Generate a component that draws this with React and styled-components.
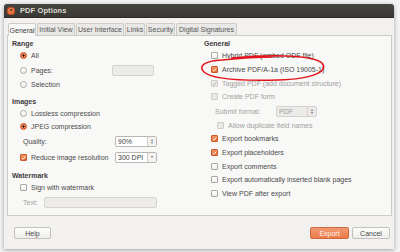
import React from "react";
import styled, { createGlobalStyle, css } from "styled-components";

const Global = createGlobalStyle`
  html, body { margin: 0; padding: 0; }
  body {
    width: 400px; height: 252px; overflow: hidden;
    background: #f3f3f3;
    font-family: "Liberation Sans", Arial, sans-serif;
    font-size: 7px;
    color: #4a4a4a;
  }
`;

const Stage = styled.div`
  position: relative;
  width: 400px;
  height: 252px;
  padding: 4px 0 0 4px;
  box-sizing: border-box;
`;

const Window = styled.div`
  width: 390px;
  height: 245px;
  display: flex;
  flex-direction: column;
  background: #f2f1f0;
  box-shadow: 0 1px 4px rgba(0,0,0,0.35);
  border-radius: 3px 3px 0 0;
  overflow: hidden;
`;

const TitleBar = styled.div`
  height: 13px;
  flex: none;
  display: flex;
  align-items: center;
  gap: 5px;
  padding-left: 3px;
  background: linear-gradient(#45443f, #3a3935);
  border-bottom: 1px solid #2a2926;
`;

const CloseBtn = styled.div`
  width: 8px;
  height: 8px;
  border-radius: 50%;
  background: radial-gradient(circle at 50% 40%, #f48a5a, #d9531e);
  box-shadow: inset 0 0 0 0.5px #a8401a;
  display: flex;
  align-items: center;
  justify-content: center;
  color: #3a2018;
  font-size: 5px;
  line-height: 1;
  font-weight: bold;
`;

const Title = styled.div`
  color: #dfdbd2;
  font-weight: bold;
  font-size: 7.5px;
  letter-spacing: 0.1px;
`;

const Body = styled.div`
  flex: 1;
  display: flex;
  flex-direction: column;
  padding: 4px 2px 0 3px;
`;

const Tabs = styled.div`
  display: flex;
  height: 13px;
  padding-left: 1px;
  gap: 1px;
  align-items: flex-end;
`;

const Tab = styled.div`
  height: 12px;
  box-sizing: border-box;
  padding: 0 2px;
  display: flex;
  align-items: center;
  border: 1px solid #cdcbc8;
  border-bottom: none;
  border-radius: 2px 2px 0 0;
  background: #e9e8e6;
  color: #555;
  white-space: nowrap;
  width: ${(p) => p.w}px;
  justify-content: center;
  ${(p) =>
    p.active &&
    css`
      height: 13px;
      background: #f8f8f7;
      color: #3c3c3c;
      margin-bottom: -1px;
      position: relative;
      z-index: 1;
    `}
`;

const Panel = styled.div`
  height: 181px;
  box-sizing: border-box;
  border: 1px solid #cdcbc8;
  background: #f8f8f7;
  display: grid;
  grid-template-columns: 192px 1fr;
  padding: 2px 0 0 4px;
`;

const Column = styled.div`
  display: flex;
  flex-direction: column;
`;

const Row = styled.div`
  height: 11px;
  display: flex;
  align-items: center;
  margin-top: ${(p) => p.mt || 0}px;
  padding-left: ${(p) => p.indent || 0}px;
  white-space: nowrap;
  color: ${(p) => (p.disabled ? "#a3a19e" : "#4a4a4a")};
`;

const Header = styled(Row)`
  font-weight: bold;
  color: #3c3c3c;
`;

const Label = styled.span`
  margin-left: 4px;
`;

const FieldLabel = styled.span`
  width: ${(p) => p.w}px;
  flex: none;
`;

const Radio = styled.span`
  width: 7px;
  height: 7px;
  box-sizing: border-box;
  border-radius: 50%;
  flex: none;
  border: 1px solid #aaa8a5;
  background: linear-gradient(#fff, #f0efee);
  ${(p) =>
    p.checked &&
    css`
      border-color: #c8541f;
      background: radial-gradient(circle, #4a2414 0 1.1px, #f5a47c 1.4px 1.8px, #e96a34 2.2px);
    `}
`;

const Box = styled.span`
  width: 7px;
  height: 7px;
  box-sizing: border-box;
  border-radius: 1px;
  flex: none;
  border: 1px solid #aaa8a5;
  background: linear-gradient(#fff, #f0efee);
  display: flex;
  align-items: center;
  justify-content: center;
  ${(p) =>
    p.checked &&
    css`
      border-color: #cc5a28;
      background: linear-gradient(#f39466, #e76d37);
    `}
  ${(p) =>
    p.disabled &&
    css`
      border-color: #cfcdca;
      background: #ebeae8;
    `}
`;

const Check = ({ color = "#fff" }) => (
  <svg width="6" height="6" viewBox="0 0 6 6">
    <path d="M0.8 3.1 L2.4 4.6 L5.2 1.2" fill="none" stroke={color} strokeWidth="1.1" />
  </svg>
);

const Input = styled.div`
  width: ${(p) => p.w}px;
  height: 11px;
  box-sizing: border-box;
  border: 1px solid ${(p) => (p.disabled ? "#d5d3d0" : "#b9b7b4")};
  border-radius: 2px;
  background: ${(p) => (p.disabled ? "#ecebe9" : "#fff")};
  display: flex;
  align-items: center;
  margin-left: ${(p) => p.ml || 0}px;
  color: ${(p) => (p.disabled ? "#a3a19e" : "#3c3c3c")};
  overflow: hidden;
`;

const InputText = styled.span`
  flex: 1;
  padding-left: 2px;
`;

const Stepper = styled.span`
  width: 8px;
  height: 100%;
  border-left: 1px solid ${(p) => (p.disabled ? "#d5d3d0" : "#d0cecb")};
  background: ${(p) => (p.disabled ? "#ecebe9" : "#f4f3f2")};
  display: flex;
  flex-direction: column;
  align-items: center;
  justify-content: center;
  font-size: 3.5px;
  line-height: 3px;
  color: #777;
`;

const ButtonRow = styled.div`
  display: flex;
  align-items: center;
  padding: 11px 2px 0 7px;
  gap: 3px;
`;

const Spacer = styled.div`
  flex: 1;
`;

const Button = styled.div`
  width: ${(p) => p.w}px;
  height: 12px;
  box-sizing: border-box;
  border-radius: 2px;
  display: flex;
  align-items: center;
  justify-content: center;
  border: 1px solid #c3c1be;
  background: linear-gradient(#fcfcfb, #efeeed);
  color: #4a4a4a;
  ${(p) =>
    p.primary &&
    css`
      border-color: #d0693c;
      background: linear-gradient(#f39a72, #ec7b4b);
      color: #fff3ec;
    `}
`;

const Scribble = styled.svg`
  position: absolute;
  left: 0;
  top: 0;
  pointer-events: none;
`;

const tabs = [
  ["General", 28],
  ["Initial View", 38],
  ["User Interface", 48],
  ["Links", 20],
  ["Security", 29],
  ["Digital Signatures", 61],
];

export default function App() {
  return (
    <>
      <Global />
      <Stage>
        <Window>
          <TitleBar>
            <CloseBtn>×</CloseBtn>
            <Title>PDF Options</Title>
          </TitleBar>
          <Body>
            <Tabs>
              {tabs.map(([t, w], i) => (
                <Tab key={t} w={w} active={i === 0}>
                  {t}
                </Tab>
              ))}
            </Tabs>
            <Panel>
              <Column>
                <Header>Range</Header>
                <Row mt={1} indent={8}>
                  <Radio checked />
                  <Label>All</Label>
                </Row>
                <Row mt={4} indent={8}>
                  <Radio />
                  <Label style={{ width: 81 }}>Pages:</Label>
                  <Input w={42} disabled />
                </Row>
                <Row mt={3} indent={8}>
                  <Radio />
                  <Label>Selection</Label>
                </Row>
                <Header mt={6}>Images</Header>
                <Row mt={1} indent={8}>
                  <Radio />
                  <Label>Lossless compression</Label>
                </Row>
                <Row mt={2} indent={8}>
                  <Radio checked />
                  <Label>JPEG compression</Label>
                </Row>
                <Row mt={4} indent={11}>
                  <FieldLabel w={92}>Quality:</FieldLabel>
                  <Input w={42}>
                    <InputText>90%</InputText>
                    <Stepper>
                      <span>▲</span>
                      <span>▼</span>
                    </Stepper>
                  </Input>
                </Row>
                <Row mt={5} indent={8}>
                  <Box checked>
                    <Check />
                  </Box>
                  <Label style={{ width: 84 }}>Reduce image resolution</Label>
                  <Input w={42}>
                    <InputText>300 DPI</InputText>
                    <Stepper>▼</Stepper>
                  </Input>
                </Row>
                <Header mt={7}>Watermark</Header>
                <Row mt={1} indent={8}>
                  <Box />
                  <Label>Sign with watermark</Label>
                </Row>
                <Row mt={4} indent={11} disabled>
                  <FieldLabel w={21}>Text:</FieldLabel>
                  <Input w={113} disabled />
                </Row>
              </Column>
              <Column>
                <Header>General</Header>
                <Row mt={1} indent={7}>
                  <Box />
                  <Label>Hybrid PDF (embed ODF file)</Label>
                </Row>
                <Row mt={3} indent={7}>
                  <Box checked>
                    <Check />
                  </Box>
                  <Label>Archive PDF/A-1a (ISO 19005-1)</Label>
                </Row>
                <Row mt={3} indent={7} disabled>
                  <Box disabled>
                    <Check color="#b9b7b4" />
                  </Box>
                  <Label>Tagged PDF (add document structure)</Label>
                </Row>
                <Row mt={2} indent={7} disabled>
                  <Box disabled />
                  <Label>Create PDF form</Label>
                </Row>
                <Row mt={4} indent={11} disabled>
                  <FieldLabel w={61}>Submit format:</FieldLabel>
                  <Input w={41} disabled>
                    <InputText>PDF</InputText>
                    <Stepper disabled>
                      <span>▲</span>
                      <span>▼</span>
                    </Stepper>
                  </Input>
                </Row>
                <Row mt={3} indent={13} disabled>
                  <Box disabled />
                  <Label>Allow duplicate field names</Label>
                </Row>
                <Row mt={2} indent={7}>
                  <Box checked>
                    <Check />
                  </Box>
                  <Label>Export bookmarks</Label>
                </Row>
                <Row mt={3} indent={7}>
                  <Box checked>
                    <Check />
                  </Box>
                  <Label>Export placeholders</Label>
                </Row>
                <Row mt={3} indent={7}>
                  <Box />
                  <Label>Export comments</Label>
                </Row>
                <Row mt={2} indent={7}>
                  <Box />
                  <Label>Export automatically inserted blank pages</Label>
                </Row>
                <Row mt={3} indent={7}>
                  <Box />
                  <Label>View PDF after export</Label>
                </Row>
              </Column>
            </Panel>
            <ButtonRow>
              <Button w={37}>Help</Button>
              <Spacer />
              <Button w={39} primary>
                Export
              </Button>
              <Button w={38}>Cancel</Button>
            </ButtonRow>
          </Body>
        </Window>
        <Scribble width="400" height="252" viewBox="0 0 400 252">
          <path
            d="M232 58 C262 55 312 54 322 63 C329 71 314 79 278 80 C243 81 212 79 204 72 C198 66 204 61 222 60 C242 58 258 57 272 57"
            fill="none"
            stroke="#e3151c"
            strokeWidth="1.6"
            strokeLinecap="round"
          />
        </Scribble>
      </Stage>
    </>
  );
}
